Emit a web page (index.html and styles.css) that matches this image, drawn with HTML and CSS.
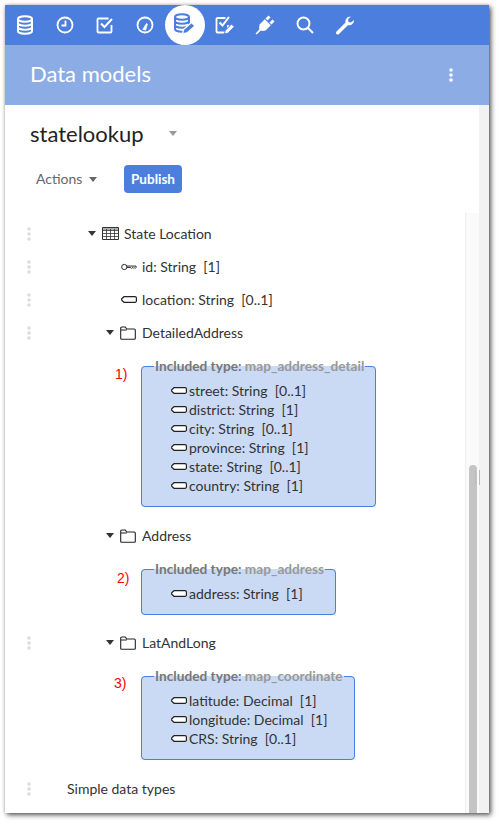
FILE: index.html
```html
<!DOCTYPE html>
<html lang="en">
<head>
<meta charset="utf-8">
<title>Data models</title>
<link rel="stylesheet" href="styles.css">
</head>
<body>
<svg class="defs" width="0" height="0" aria-hidden="true">
  <symbol id="handle" viewBox="0 0 4 14"><circle cx="2" cy="2" r="1.800"/><circle cx="2" cy="7" r="1.800"/><circle cx="2" cy="12" r="1.800"/></symbol>
  <symbol id="attr" viewBox="0 0 16 7"><path d="M3 .7H14a1.400 1.400 0 0 1 1.400 1.400v2.800A1.400 1.400 0 0 1 14 6.300H3L.7 4.300V2.700z" fill="#fff" stroke="#222" stroke-width="1.200"/></symbol>
  <symbol id="folder" viewBox="0 0 16 14"><path d="M.7 12.500V2a1 1 0 0 1 1-1h3.600l1.400 2h7.600a1 1 0 0 1 1 1v8.500a.8.8 0 0 1-.8.8H1.500a.8.8 0 0 1-.8-.8zM.7 4h6" fill="none" stroke="#222" stroke-width="1.100"/></symbol>
  <symbol id="db" viewBox="0 0 18 20"><g fill="none" stroke="currentColor" stroke-width="2"><ellipse cx="9" cy="4" rx="7" ry="2.700"/><path d="M2 4v12c0 1.600 3.100 2.800 7 2.800s7-1.200 7-2.800V4M2 8c0 1.600 3.100 2.800 7 2.800s7-1.200 7-2.800M2 12c0 1.600 3.100 2.800 7 2.800s7-1.200 7-2.800"/></g></symbol>
</svg>
<main class="window">
  <nav class="toolbar">
    <span class="tool"><svg class="icon" width="18" height="20"><use href="#db"/></svg></span>
    <span class="tool"><svg class="icon" width="18" height="18" viewBox="0 0 18 18" fill="none" stroke="currentColor" stroke-width="1.800"><circle cx="9" cy="9" r="7.500"/><path d="M9.500 4.500V9.500H5.500"/></svg></span>
    <span class="tool"><svg class="icon" width="18" height="18" viewBox="0 0 18 18" fill="none" stroke="currentColor" stroke-width="1.800"><path d="M15.500 9v6.500a1 1 0 0 1-1 1h-12a1 1 0 0 1-1-1v-12a1 1 0 0 1 1-1h10"/><path d="M5 7.500l3.500 3.500L16 3" stroke-width="2"/></svg></span>
    <span class="tool"><svg class="icon" width="18" height="18" viewBox="0 0 18 18" fill="none" stroke="currentColor" stroke-width="1.800"><circle cx="9" cy="9" r="7.500"/><path d="M6.800 13.500l3.700-6 .9 .6-1.800 6z" fill="currentColor" stroke-width=".8"/></svg></span>
    <span class="tool tool-active"><svg class="icon" width="24" height="24" viewBox="0 0 24 24"><use href="#db" x="0" y="0" width="18" height="20"/><path d="M9.500 21l1-4.500L18.500 9.500l3.500 3.500-8 7z" fill="currentColor" stroke="#fff" stroke-width="1.300"/></svg></span>
    <span class="tool"><svg class="icon" width="20" height="20" viewBox="0 0 20 20" fill="none" stroke="currentColor" stroke-width="1.800"><path d="M13 10V16.500a1 1 0 0 1-1 1H2.500a1 1 0 0 1-1-1V4a1 1 0 0 1 1-1h8"/><path d="M4.500 7.500l3 3L14 2" stroke-width="2"/><path d="M9.500 19l.7-3.500L16.500 9l2.800 2.800-6.300 6.400z" fill="currentColor" stroke="#4c7fdd" stroke-width="1"/></svg></span>
    <span class="tool"><svg class="icon" width="20" height="20" viewBox="0 0 20 20" fill="currentColor"><path d="M.5 18.500l4-4.200-.5-1.300.6-3.500L9.800 4.300l6 6-5.200 5.100-3.500.6-1.300-.5-4.100 4z"/><path d="M10.500 3.500L13.500 .5l2 2-3 3zM14.500 7.500l3-3 2 2-3 3z"/></svg></span>
    <span class="tool"><svg class="icon" width="18" height="18" viewBox="0 0 18 18" fill="none" stroke="currentColor" stroke-width="1.900"><circle cx="7.500" cy="7.500" r="6"/><path d="M12 12l5 5"/></svg></span>
    <span class="tool"><svg class="icon" width="20" height="20" viewBox="0 0 20 20" fill="currentColor"><path d="M1.500 16.500L10.500 7.500C10 4.500 12 1.500 15.800 1.500L13 4.500l.5 2.500 2.500.5L19 5c.2 3.500-2.800 5.800-6.200 5.200L4 19c-.8.800-1.800.800-2.500.100-.7-.8-.7-1.800 0-2.600z"/></svg></span>
  </nav>
  <header class="subheader">
    <h1 class="page-title">Data models</h1>
    <svg class="more" width="4" height="14" viewBox="0 0 4 14" fill="#fff"><circle cx="2" cy="2" r="1.800"/><circle cx="2" cy="7" r="1.800"/><circle cx="2" cy="12" r="1.800"/></svg>
  </header>
  <div class="body">
    <div class="content">
      <section class="heading">
        <div class="model-line">
          <h2 class="model-name">statelookup</h2>
          <span class="caret caret-light"></span>
        </div>
        <div class="actions">
          <span class="actions-menu">Actions<span class="caret caret-mid"></span></span>
          <button class="publish" type="button">Publish</button>
        </div>
      </section>
      <div class="pane">
        <div class="tree">
          <div class="row">
            <svg class="handle"><use href="#handle"/></svg>
            <div class="node indent-1">
              <span class="caret caret-dark"></span>
              <svg class="table-icon" width="17" height="13" viewBox="0 0 17 13" fill="none" stroke="#333"><path d="M.5.5h16v12H.5z"/><path d="M.5 2h16M.5 3.500h16M.5 6.500h16M.5 9.500h16M4.500 2v10.500M8.500 2v10.500M12.500 2v10.500" stroke-width=".8"/></svg>
              <span>State Location</span>
            </div>
          </div>
          <div class="row">
            <svg class="handle"><use href="#handle"/></svg>
            <div class="node indent-3">
              <svg class="attr-icon" width="16" height="8" viewBox="0 0 17 8" fill="none" stroke="#222"><circle cx="3.500" cy="4" r="2.800"/><path d="M6.300 3H16v1.500l-1 1-1-1-1 1-1-1-1 1-1-1H6.300"/></svg>
              <span>id: String &nbsp;[1]</span>
            </div>
          </div>
          <div class="row">
            <svg class="handle"><use href="#handle"/></svg>
            <div class="node indent-3">
              <svg class="attr-icon" width="16" height="7"><use href="#attr"/></svg>
              <span>location: String &nbsp;[0..1]</span>
            </div>
          </div>
          <div class="row">
            <svg class="handle"><use href="#handle"/></svg>
            <div class="node indent-2">
              <span class="caret caret-dark"></span>
              <svg class="folder-icon" width="16" height="14"><use href="#folder"/></svg>
              <span>DetailedAddress</span>
            </div>
          </div>
          <div class="included note-1">
            <span class="note">1)</span>
            <fieldset class="box box-wide">
              <legend class="box-legend">Included type: <span class="type-name">map_address_detail</span></legend>
              <div class="field"><svg width="16" height="7"><use href="#attr"/></svg><span>street: String &nbsp;[0..1]</span></div>
              <div class="field"><svg width="16" height="7"><use href="#attr"/></svg><span>district: String &nbsp;[1]</span></div>
              <div class="field"><svg width="16" height="7"><use href="#attr"/></svg><span>city: String &nbsp;[0..1]</span></div>
              <div class="field"><svg width="16" height="7"><use href="#attr"/></svg><span>province: String &nbsp;[1]</span></div>
              <div class="field"><svg width="16" height="7"><use href="#attr"/></svg><span>state: String &nbsp;[0..1]</span></div>
              <div class="field"><svg width="16" height="7"><use href="#attr"/></svg><span>country: String &nbsp;[1]</span></div>
            </fieldset>
          </div>
          <div class="row">
            <span class="handle-gap"></span>
            <div class="node indent-2">
              <span class="caret caret-dark"></span>
              <svg class="folder-icon" width="16" height="14"><use href="#folder"/></svg>
              <span>Address</span>
            </div>
          </div>
          <div class="included note-2">
            <span class="note">2)</span>
            <fieldset class="box box-small">
              <legend class="box-legend">Included type: <span class="type-name">map_address</span></legend>
              <div class="field"><svg width="16" height="7"><use href="#attr"/></svg><span>address: String &nbsp;[1]</span></div>
            </fieldset>
          </div>
          <div class="row">
            <svg class="handle"><use href="#handle"/></svg>
            <div class="node indent-2">
              <span class="caret caret-dark"></span>
              <svg class="folder-icon" width="16" height="14"><use href="#folder"/></svg>
              <span>LatAndLong</span>
            </div>
          </div>
          <div class="included note-3">
            <span class="note">3)</span>
            <fieldset class="box box-mid">
              <legend class="box-legend">Included type: <span class="type-name">map_coordinate</span></legend>
              <div class="field"><svg width="16" height="7"><use href="#attr"/></svg><span>latitude: Decimal &nbsp;[1]</span></div>
              <div class="field"><svg width="16" height="7"><use href="#attr"/></svg><span>longitude: Decimal &nbsp;[1]</span></div>
              <div class="field"><svg width="16" height="7"><use href="#attr"/></svg><span>CRS: String &nbsp;[0..1]</span></div>
            </fieldset>
          </div>
          <div class="row">
            <svg class="handle"><use href="#handle"/></svg>
            <div class="node indent-0"><span>Simple data types</span></div>
          </div>
        </div>
        <div class="track"><div class="thumb"><span class="grip"></span></div></div>
      </div>
    </div>
    <div class="gutter"></div>
  </div>
</main>
</body>
</html>
```
FILE: styles.css
```css
* { box-sizing: border-box; }
html, body { margin: 0; height: 100%; overflow: hidden; background: #fff; }
body { padding: 5px 9px 9px 5px; font-family: Lato, "Liberation Sans", sans-serif; font-size: 14px; color: #333; }
.defs { position: absolute; }
.window { height: 808px; display: flex; flex-direction: column; background: #fff; box-shadow: 2px 2px 5px rgba(0,0,0,.65), 0 0 3px rgba(0,0,0,.2); }

.toolbar { height: 40px; flex: none; display: flex; background: #4c7fdd; color: #fff; }
.tool { width: 40px; height: 40px; display: flex; align-items: center; justify-content: center; }
.tool-active { background: #fff; border-radius: 50%; color: #4c7fdd; }

.subheader { height: 60px; flex: none; display: flex; align-items: center; justify-content: space-between; padding: 0 36px 0 25px; background: #8bace4; color: #fff; }
.page-title { margin: 0 0 3px; font-size: 22px; font-weight: 400; }
.more { display: block; }

.body { flex: 1; min-height: 0; display: flex; }
.content { flex: 1; min-width: 0; display: flex; flex-direction: column; }
.gutter { width: 10px; background: #f2f2f2; }

.heading { height: 108px; flex: none; padding: 14px 0 0 25px; }
.model-line { display: flex; align-items: center; gap: 25px; height: 29px; }
.model-name { margin: 0; font-size: 22px; font-weight: 400; color: #222; }
.actions { display: flex; align-items: center; margin-top: 17px; padding-left: 6px; height: 28px; }
.actions-menu { width: 88px; display: flex; align-items: center; gap: 7px; color: #666; line-height: 26px; height: 26px; }
.publish { width: 58px; height: 28px; border: 0; border-radius: 4px; padding: 0; background: #4c7fdd; color: #fff; font: 700 13.500px Lato, sans-serif; }

.caret { display: inline-block; width: 0; height: 0; border-style: solid; border-color: currentColor transparent transparent; border-width: 5px 4.500px 0; }
.caret-light { color: #999; }
.caret-mid { color: #666; }
.caret-dark { color: #333; }

.pane { flex: 1; min-height: 0; display: flex; }
.tree { flex: 1; min-width: 0; padding-top: 4px; }
.track { width: 14px; flex: none; background: #fafafa; border-left: 1px solid #eee; padding: 252px 2px 0 3px; }
.thumb { position: relative; height: 100%; background: #c4c4c4; border-radius: 4px 4px 0 0; }
.grip { position: absolute; left: 6px; top: 5px; width: 5px; height: 15px; border: solid #bbb; border-width: 0 1px; }

.row { height: 33px; display: flex; align-items: center; padding-left: 22px; }
.handle { width: 4px; height: 14px; margin-right: 2px; fill: #ddd; flex: none; }
.handle-gap { width: 6px; flex: none; }
.node { display: flex; align-items: center; }
.indent-0 { padding-left: 34px; }
.indent-1 { padding-left: 55px; gap: 6px; }
.indent-1 span:last-child { margin-left: -1px; }
.indent-2 { padding-left: 73px; gap: 6px; }
.indent-3 { padding-left: 88px; gap: 5px; }
.attr-icon, .table-icon, .folder-icon { flex: none; display: block; }

.included { display: flex; align-items: flex-start; margin: 10px 0 12px; }
.included.note-2 { margin-bottom: 11px; }
.note { color: #f00; font: 14px "Liberation Sans", Arial, sans-serif; margin-top: 7px; }
.note-1 { padding-left: 110px; }
.note-1 .note { width: 26px; }
.note-2 { padding-left: 112px; }
.note-2 .note { width: 24px; margin-top: 8px; }
.note-3 { padding-left: 109px; }
.note-3 .note { width: 27px; margin-top: 6px; }

.box { margin: 0; min-width: 0; padding: 8px 0 11px 12px; border: 1px solid #4c7fdd; border-radius: 4px; background: #cadaf4; }
.box-wide { width: 235px; }
.box-small { width: 195px; }
.box-mid { width: 214px; }
.box-legend { padding: 0 1px; font-size: 13.700px; line-height: 14px; font-weight: 700; color: #777; white-space: nowrap; }
.type-name { color: #999; }
.field { height: 19px; margin-left: 17px; display: flex; align-items: center; gap: 2px; }
.field svg { flex: none; }
```
